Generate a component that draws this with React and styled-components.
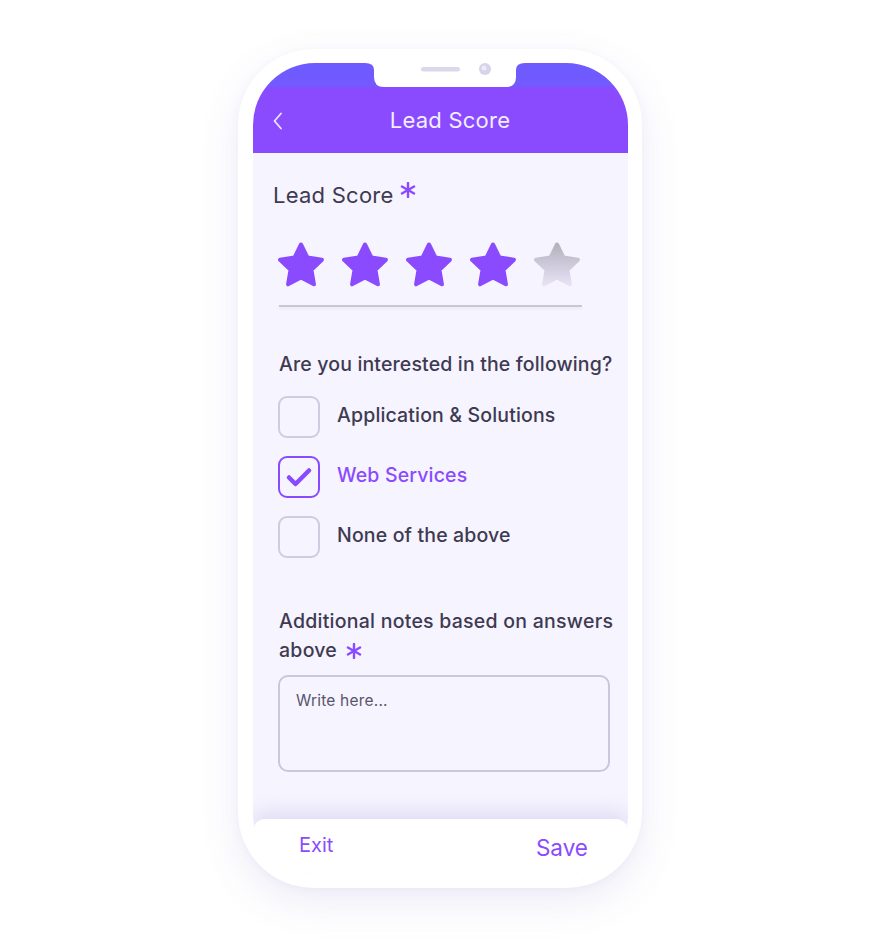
import React from 'react';
import styled, { createGlobalStyle } from 'styled-components';

const GlobalStyle = createGlobalStyle`
    body {
        margin: 0;
        background: #ffffff;
        font-family: Inter, "Noto Sans", sans-serif;
    }
`;

const Page = styled.div`
    padding: 49px 0 0 238px;
    height: 892px;
`;

const Phone = styled.div`
    box-sizing: border-box;
    width: 404px;
    height: 839px;
    padding: 14px 14px 15px 15px;
    background: #ffffff;
    border-radius: 76px;
    box-shadow: 0 14px 40px rgba(110, 95, 190, 0.12), 0 2px 10px rgba(110, 95, 190, 0.05);
`;

const Screen = styled.div`
    position: relative;
    height: 100%;
    display: flex;
    flex-direction: column;
    background: #f6f4fe;
    border-radius: 62px 62px 58px 58px;
    overflow: hidden;
`;

const Header = styled.div`
    height: 90px;
    box-sizing: border-box;
    padding: 24px 20px 0 39px;
    background: linear-gradient(to bottom, #6e5bff 0, #725aff 24px, #8a4bff 24px);
    display: flex;
    align-items: center;
    position: relative;
`;

const Notch = styled.svg`
    position: absolute;
    top: 0;
    left: 112px;
`;

const Back = styled.svg`
    position: absolute;
    left: 20px;
    top: 49px;
`;

const Title = styled.div`
    flex: 1;
    text-align: center;
    color: #f3eeff;
    font-size: 22px;
    letter-spacing: 0.25px;
`;

const Content = styled.div`
    flex: 1;
    padding: 29px 8px 0 26px;
    display: flex;
    flex-direction: column;
`;

const LeadLabel = styled.div`
    display: flex;
    align-items: flex-start;
    margin-left: -6px;
    font-size: 22px;
    line-height: 26px;
    letter-spacing: 0.25px;
    color: #3e3a52;
`;

const Text = styled.div`
    font-size: 19.5px;
    font-weight: 450;
    letter-spacing: 0.15px;
    color: #3e3a52;
`;

const Required = styled.svg`
    display: inline-block;
    flex-shrink: 0;
    vertical-align: ${p => p.$raise}px;
    margin-left: ${p => p.$gap}px;
`;

const StarRow = styled.div`
    display: flex;
    gap: 16px;
    margin: 34px 0 0 -2px;
`;

const Rule = styled.div`
    width: 303px;
    height: 2px;
    margin-top: 17px;
    background: #c9c6d6;
    box-shadow: 0 2px 3px rgba(60, 50, 100, 0.07);
`;

const Question = styled(Text)`
    margin-top: 44px;
    line-height: 26px;
    white-space: nowrap;
`;

const Options = styled.div`
    display: flex;
    flex-direction: column;
    gap: 18px;
    margin-top: 19px;
`;

const Option = styled.div`
    display: flex;
    align-items: center;
    gap: 17px;
    margin-left: -1px;
`;

const Box = styled.div`
    box-sizing: border-box;
    width: 42px;
    height: 42px;
    border-radius: 9px;
    border: 2px solid ${p => (p.$checked ? '#8a4bff' : '#cfcbe0')};
    display: flex;
    align-items: center;
    justify-content: center;
`;

const OptionText = styled(Text)`
    padding-bottom: 5px;
    color: ${p => (p.$checked ? '#8a4bff' : '#3e3a52')};
`;

const Notes = styled(Text)`
    width: 340px;
    margin-top: 49px;
    line-height: 29px;
    letter-spacing: 0.25px;
`;

const TextArea = styled.div`
    box-sizing: border-box;
    width: 332px;
    height: 97px;
    margin: 10px 0 0 -1px;
    padding: 14px 16px;
    border: 2px solid #cbc6de;
    border-radius: 10px;
    font-size: 15.5px;
    letter-spacing: 0.2px;
    color: #58546c;
`;

const Footer = styled.div`
    height: 54px;
    box-sizing: border-box;
    padding: 0 40px 0 46px;
    background: #ffffff;
    border-radius: 12px 12px 0 0;
    box-shadow: 0 -8px 18px rgba(150, 140, 215, 0.22);
    display: flex;
    justify-content: space-between;
    align-items: center;
`;

const FooterButton = styled.div`
    color: #8a4bff;
    font-size: ${p => p.$size}px;
    margin-top: ${p => p.$drop}px;
`;

const STAR = '24,2.5 30.47,15.6 44.92,17.7 34.46,27.9 36.93,42.3 24,35.5 11.07,42.3 13.54,27.9 3.08,17.7 17.53,15.6';

function Star({ filled, id }) {
    const fill = filled ? '#8a4bff' : `url(#${id})`;
    return (
        <svg width="48" height="46" viewBox="0 0 48 46">
            {!filled && (
                <defs>
                    <linearGradient id={id} x1="0" y1="0" x2="0" y2="1">
                        <stop offset="0" stopColor="#b4b2bf" />
                        <stop offset="1" stopColor="#e7e1f4" />
                    </linearGradient>
                </defs>
            )}
            <polygon points={STAR} fill={fill} stroke={fill} strokeWidth="4" strokeLinejoin="round" />
        </svg>
    );
}

function Asterisk({ raise = 0, gap }) {
    return (
        <Required width="16" height="16" viewBox="0 0 16 16" $raise={raise} $gap={gap}>
            <g stroke="#8a4bff" strokeWidth="2.4" strokeLinecap="round">
                <line x1="8" y1="1" x2="8" y2="15" />
                <line x1="1.9" y1="4.5" x2="14.1" y2="11.5" />
                <line x1="1.9" y1="11.5" x2="14.1" y2="4.5" />
            </g>
        </Required>
    );
}

const options = [
    { label: 'Application & Solutions', checked: false },
    { label: 'Web Services', checked: true },
    { label: 'None of the above', checked: false },
];

export default function App() {
    const score = 4;
    return (
        <>
            <GlobalStyle />
            <Page>
                <Phone>
                    <Screen>
                        <Header>
                            <Notch width="160" height="24" viewBox="0 0 160 24">
                                <path d="M0 0 Q9 0 9 7 V14 Q9 24 19 24 H141 Q151 24 151 14 V7 Q151 0 160 0 Z" fill="#ffffff" />
                                <rect x="56" y="4" width="39" height="4.5" rx="2.25" fill="#dcd8ec" />
                                <circle cx="120" cy="6" r="6" fill="#d8d3ea" />
                                <circle cx="119" cy="5" r="2.5" fill="#eeebf7" />
                            </Notch>
                            <Back width="10" height="18" viewBox="0 0 10 18">
                                <path d="M8 1.5 L1.5 9 L8 16.5" fill="none" stroke="#ece4ff" strokeWidth="1.8" strokeLinecap="round" strokeLinejoin="round" />
                            </Back>
                            <Title>Lead Score</Title>
                        </Header>
                        <Content>
                            <LeadLabel>
                                Lead Score
                                <Asterisk gap={6} />
                            </LeadLabel>
                            <StarRow>
                                {[1, 2, 3, 4, 5].map(n => (
                                    <Star key={n} id={`star-${n}`} filled={n <= score} />
                                ))}
                            </StarRow>
                            <Rule />
                            <Question>Are you interested in the following?</Question>
                            <Options>
                                {options.map(o => (
                                    <Option key={o.label}>
                                        <Box $checked={o.checked}>
                                            {o.checked && (
                                                <svg width="30" height="24" viewBox="0 0 30 24">
                                                    <path d="M5 12.5 L11.5 19 L25 5.5" fill="none" stroke="#8a4bff" strokeWidth="4.5" strokeLinecap="round" strokeLinejoin="round" />
                                                </svg>
                                            )}
                                        </Box>
                                        <OptionText $checked={o.checked}>{o.label}</OptionText>
                                    </Option>
                                ))}
                            </Options>
                            <Notes>
                                Additional notes based on answers above
                                <Asterisk raise={-2} gap={9} />
                            </Notes>
                            <TextArea>Write here...</TextArea>
                        </Content>
                        <Footer>
                            <FooterButton $size={20} $drop={-2}>Exit</FooterButton>
                            <FooterButton $size={22.5} $drop={2}>Save</FooterButton>
                        </Footer>
                    </Screen>
                </Phone>
            </Page>
        </>
    );
}
